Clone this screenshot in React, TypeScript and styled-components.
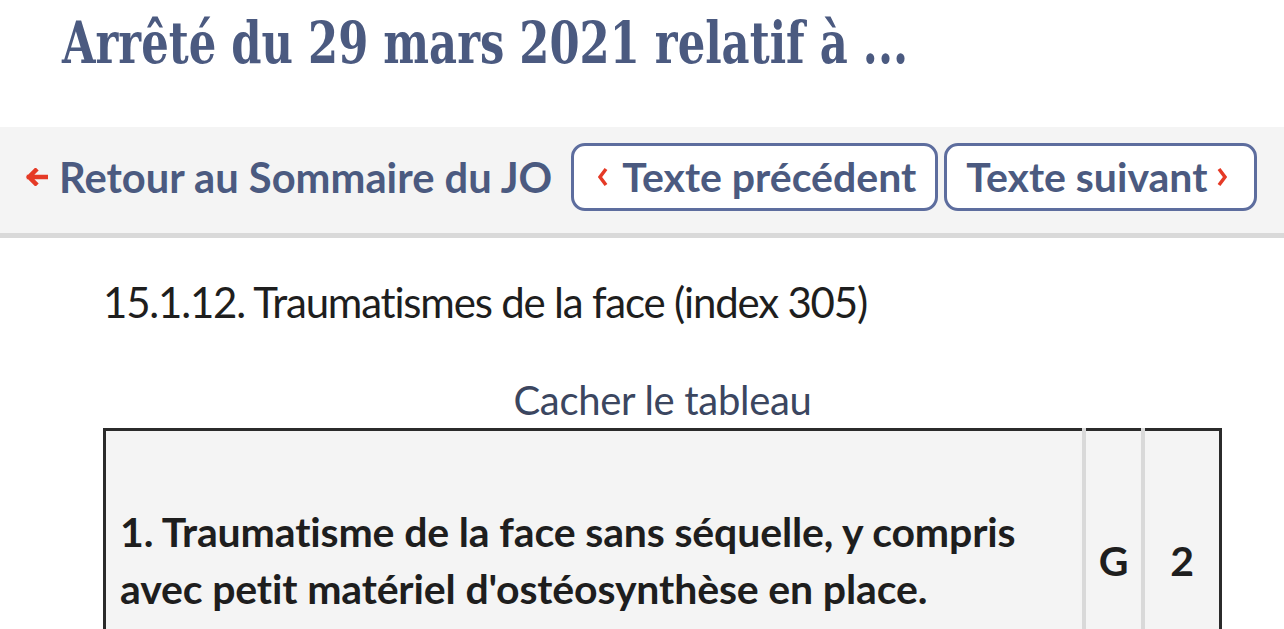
import styled, { createGlobalStyle } from 'styled-components'

const GlobalStyle = createGlobalStyle`
  html, body {
    margin: 0;
    padding: 0;
    background: #ffffff;
  }
  body {
    font-family: Lato, "Noto Sans", sans-serif;
    font-variant-ligatures: none;
    font-feature-settings: "liga" 0;
    color: #1e1e1e;
  }
`

const TitleBar = styled.header`
  height: 127px;
  padding: 8px 0 0 62px;
  box-sizing: border-box;
`

const Title = styled.h1`
  margin: 0;
  font-family: "DejaVu Serif", serif;
  font-weight: 700;
  font-size: 58px;
  line-height: 70px;
  color: #4b5a80;
  white-space: nowrap;
  transform: scaleX(0.746);
  transform-origin: left center;
`

const NavBar = styled.nav`
  display: flex;
  align-items: center;
  height: 111px;
  box-sizing: border-box;
  padding: 0 0 7px 24px;
  background: #f4f4f4;
  border-bottom: 5px solid #d9d9d9;
`

const BackLink = styled.a`
  display: flex;
  align-items: center;
  gap: 11px;
  margin-right: 19px;
  font-size: 41.7px;
  font-weight: 700;
  color: #4b5a80;
  text-decoration: none;
  white-space: nowrap;
`

const NavButtons = styled.div`
  display: flex;
  gap: 6px;
`

const NavButton = styled.a<{ $next?: boolean }>`
  display: flex;
  align-items: center;
  gap: ${({ $next }) => ($next ? '10px' : '14px')};
  height: 68px;
  box-sizing: border-box;
  padding: ${({ $next }) => ($next ? '0 27px 0 19px' : '0 19px 0 24px')};
  border: 3px solid #5d6d9e;
  border-radius: 14px;
  background: #ffffff;
  font-size: 41px;
  font-weight: 700;
  color: #4b5a80;
  text-decoration: none;
  white-space: nowrap;
`

const Content = styled.main`
  width: 1119px;
  padding: 39px 0 0 103px;
`

const Heading = styled.p`
  margin: 0;
  font-size: 42px;
  letter-spacing: -1.2px;
  line-height: 50px;
  color: #1e1e1e;
`

const Toggle = styled.p`
  margin: 49px 0 0;
  text-align: center;
  font-size: 40px;
  letter-spacing: -0.3px;
  line-height: 48px;
  color: #3b4660;
`

const Table = styled.table`
  width: 100%;
  margin-top: 4px;
  border-collapse: collapse;
  border: 3px solid #2b2b2b;
  background: #f4f4f4;
`

const Cell = styled.td<{ $narrow?: boolean }>`
  padding: ${({ $narrow }) => ($narrow ? '72px 0' : '72px 14px')};
  border-left: 4px solid #d9d9d9;
  text-align: ${({ $narrow }) => ($narrow ? 'center' : 'left')};
  vertical-align: middle;
  font-size: 41px;
  letter-spacing: -0.15px;
  font-weight: 700;
  line-height: 57px;
  color: #1e1e1e;

  &:first-child {
    border-left: none;
  }
`

const ArrowIcon = () => (
  <svg width="24" height="18" viewBox="0 0 24 18" fill="none">
    <path
      d="M23.5 9H5M11.5 2.5L5 9l6.5 6.5"
      stroke="#e53a26"
      strokeWidth="4.5"
      strokeLinecap="square"
    />
  </svg>
)

const Chevron = ({ right }: { right?: boolean }) => (
  <svg width="10" height="20" viewBox="0 0 10 20" fill="none">
    <path
      d={right ? 'M2 2l6 8-6 8' : 'M8 2l-6 8 6 8'}
      stroke="#e53a26"
      strokeWidth="3.5"
    />
  </svg>
)

export default function App() {
  return (
    <>
      <GlobalStyle />
      <TitleBar>
        <Title>Arrêté du 29 mars 2021 relatif à ...</Title>
      </TitleBar>
      <NavBar>
        <BackLink href="#">
          <ArrowIcon />
          Retour au Sommaire du JO
        </BackLink>
        <NavButtons>
          <NavButton href="#">
            <Chevron />
            Texte précédent
          </NavButton>
          <NavButton href="#" $next>
            Texte suivant
            <Chevron right />
          </NavButton>
        </NavButtons>
      </NavBar>
      <Content>
        <Heading>15.1.12. Traumatismes de la face (index 305)</Heading>
        <Toggle>Cacher le tableau</Toggle>
        <Table>
          <tbody>
            <tr>
              <Cell>
                1. Traumatisme de la face sans séquelle, y compris avec petit
                matériel d'ostéosynthèse en place.
              </Cell>
              <Cell $narrow style={{ width: 55 }}>G</Cell>
              <Cell $narrow style={{ width: 74 }}>2</Cell>
            </tr>
          </tbody>
        </Table>
      </Content>
    </>
  )
}
